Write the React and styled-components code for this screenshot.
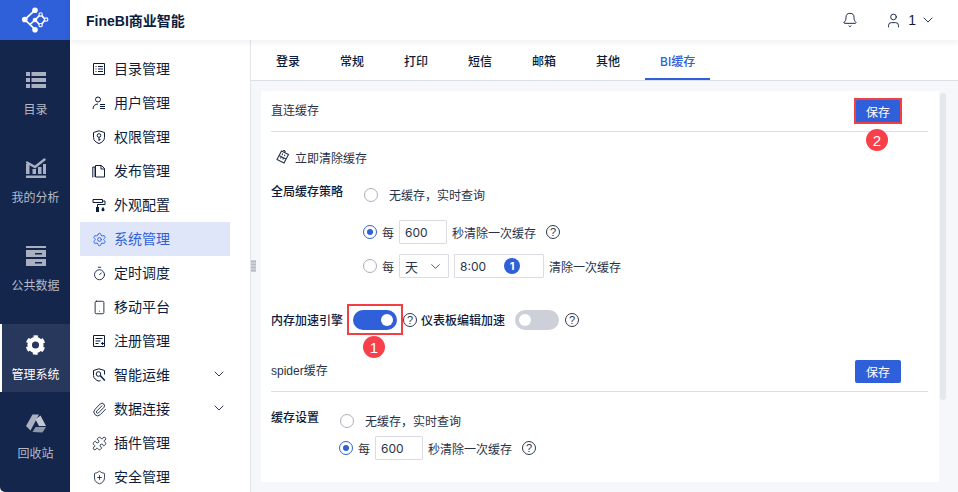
import React from 'react';
import styled, { createGlobalStyle } from 'styled-components';
import { ChevronDown, Settings, Timer, Smartphone, Paperclip, Puzzle, ShieldPlus, Bell, User } from 'lucide-react';

const FONT = '"Liberation Sans", "Noto Sans CJK SC", sans-serif';
const BLUE = '#2f5fd9';
const INK = '#0c1c3c';

const GlobalStyle = createGlobalStyle`
  html, body { margin: 0; padding: 0; background: #fff; }
  * { box-sizing: border-box; }
  body { font-family: ${FONT}; color: ${INK}; }
`;

const Page = styled.div`
  display: flex;
  width: 958px;
  height: 492px;
  overflow: hidden;
`;

/* left rail */
const Rail = styled.nav`
  flex: 0 0 70px;
  background: #14264b;
  border-bottom-left-radius: 5px;
  display: flex;
  flex-direction: column;
`;
const Logo = styled.div`
  height: 40px;
  background: ${BLUE};
  display: flex;
  align-items: center;
  justify-content: center;
`;
const RailList = styled.div`
  display: flex;
  flex-direction: column;
  gap: 20px;
  padding-top: 20px;
`;
const RailItem = styled.div`
  height: 68px;
  padding-top: ${p => (p.$active ? 11 : 10)}px;
  margin-top: ${p => (p.$tight ? -8 : 0)}px;
  display: flex;
  flex-direction: column;
  align-items: center;
  gap: 10px;
  font-size: 12px;
  line-height: 20px;
  color: ${p => (p.$active ? '#fff' : '#b4bac8')};
  background: ${p => (p.$active ? '#28375c' : 'transparent')};
  border-left: 2px solid ${p => (p.$active ? '#fff' : 'transparent')};
  border-right: 1px solid transparent;
  svg { display: block; }
`;

/* right part */
const Main = styled.div`
  flex: 1;
  min-width: 0;
  display: flex;
  flex-direction: column;
`;
const TopBar = styled.header`
  flex: 0 0 40px;
  display: flex;
  align-items: center;
  padding: 0 22px 0 16px;
  background: #fff;
  box-shadow: 0 2px 6px rgba(20, 38, 75, 0.08);
  position: relative;
  z-index: 2;
`;
const Title = styled.div`
  font-size: 14px;
  font-weight: 700;
  flex: 1;
`;
const BellWrap = styled.div`
  display: flex;
  margin-right: 27px;
`;
const UserBox = styled.div`
  display: flex;
  align-items: center;
  font-size: 14px;
  gap: 4px;
  svg { display: block; }
`;
const Body = styled.div`
  flex: 1;
  min-height: 0;
  display: flex;
`;

/* second level menu */
const SideMenu = styled.aside`
  flex: 0 0 181px;
  padding: 12px 0 0 10px;
  border-right: 1px solid #e3e5ec;
  background: #fff;
  position: relative;
`;
const MenuItem = styled.div`
  width: 150px;
  height: 34px;
  display: flex;
  align-items: center;
  padding-left: 13px;
  font-size: 14px;
  color: ${p => (p.$active ? BLUE : INK)};
  background: ${p => (p.$active ? '#e0e6f9' : 'transparent')};
`;
const MenuIcon = styled.span`
  flex: 0 0 21px;
  display: flex;
  margin-left: -1px;
  margin-right: 1px;
  svg { display: block; }
`;
const MenuLabel = styled.span`
  flex: 1;
  margin-top: -2px;
`;
const MenuArrow = styled.span`
  display: flex;
  margin-right: 3px;
  margin-top: -2px;
`;
const Handle = styled.div`
  position: absolute;
  right: -6px;
  top: 220px;
  width: 5px;
  height: 12px;
  background-image: radial-gradient(#b5bac7 0.8px, transparent 0.9px);
  background-size: 2px 3px;
`;

const Content = styled.section`
  flex: 1;
  min-width: 0;
  display: flex;
  flex-direction: column;
  background: #f6f7fb;
`;
const Tabs = styled.div`
  flex: 0 0 41px;
  display: flex;
  padding-left: 5px;
  background: #fff;
  border-bottom: 1px solid #dcdfe6;
`;
const Tab = styled.div`
  position: relative;
  height: 40px;
  padding: 0 20px;
  display: flex;
  align-items: center;
  font-size: 12px;
  font-weight: 500;
  font-family: "Inter", "Noto Sans CJK SC", sans-serif;
  color: ${p => (p.$active ? BLUE : INK)};
  &::after {
    content: '';
    display: ${p => (p.$active ? 'block' : 'none')};
    position: absolute;
    left: 5px;
    right: 5px;
    bottom: 0;
    height: 2px;
    background: ${BLUE};
  }
`;
const Scroller = styled.div`
  flex: 1;
  min-height: 0;
  display: flex;
  gap: 1px;
  padding: 10px 0 10px 10px;
`;
const Panel = styled.div`
  width: 678px;
  background: #fff;
  padding: 0 11px 0 10px;
  overflow: hidden;
  font-size: 12px;
`;
const ScrollThumb = styled.div`
  width: 6px;
  height: 307px;
  margin-top: 2px;
  border-radius: 3px;
  background: #e5e7ee;
`;

const SectionHead = styled.div`
  height: 41px;
  display: flex;
  align-items: center;
  justify-content: space-between;
  padding: ${p => (p.$top ? 0 : 1)}px 27px 0 0;
  border-bottom: 1px solid #dcdfe6;
  margin-top: ${p => p.$top || 0}px;
  color: #27334b;
`;
const HeadTitle = styled.span`
  margin-top: ${p => (p.$top ? -3 : -4)}px;
`;
const SaveWrap = styled.div`
  position: relative;
  display: flex;
`;
const SaveButton = styled.div`
  width: 46px;
  height: 23px;
  display: flex;
  align-items: center;
  justify-content: center;
  background: ${BLUE};
  color: #fff;
  border-radius: 2px;
  font-size: 12px;
`;
const MarkBox = styled.div`
  position: absolute;
  left: ${p => p.$l}px;
  top: ${p => p.$t}px;
  width: ${p => p.$w}px;
  height: ${p => p.$h}px;
  border: 2px solid #f23f44;
`;
const MarkBadge = styled.div`
  position: absolute;
  left: ${p => p.$l}px;
  top: ${p => p.$t}px;
  width: 22px;
  height: 22px;
  border-radius: 50%;
  background: #f8404a;
  color: #fff;
  font-size: 15px;
  display: flex;
  align-items: center;
  justify-content: center;
`;
const ClearRow = styled.div`
  display: flex;
  align-items: center;
  gap: 5px;
  height: 24px;
  margin-top: 13px;
  padding-left: 5px;
  color: #27334b;
  svg { display: block; }
`;
const FieldRow = styled.div`
  display: flex;
  align-items: center;
  height: 24px;
  margin-top: ${p => p.$top || 0}px;
  padding-left: ${p => p.$indent || 0}px;
  color: #27334b;
  position: relative;
`;
const FieldLabel = styled.div`
  width: ${p => p.$w}px;
  flex: none;
  align-self: flex-start;
  margin-top: ${p => p.$mt || 0}px;
  margin-left: ${p => p.$ml || 0}px;
  line-height: 16px;
  font-weight: 500;
  font-family: "Noto Sans CJK SC", sans-serif;
  color: ${INK};
`;
const Radio = styled.span`
  flex: none;
  width: 14px;
  height: 14px;
  border-radius: 50%;
  border: 1px solid ${p => (p.$on ? BLUE : '#a9afbd')};
  display: flex;
  align-items: center;
  justify-content: center;
  &::after {
    content: '';
    display: ${p => (p.$on ? 'block' : 'none')};
    width: 6px;
    height: 6px;
    border-radius: 50%;
    background: ${BLUE};
  }
`;
const Text = styled.span`
  margin-left: ${p => p.$ml || 0}px;
  margin-top: ${p => (p.$up ? -2 : 0)}px;
`;
const Box = styled.div`
  flex: none;
  width: ${p => p.$w}px;
  height: 24px;
  margin-left: ${p => p.$ml || 0}px;
  border: 1px solid #d9dce4;
  border-radius: 1px;
  padding: 0 5px 0 5px;
  display: flex;
  align-items: center;
  justify-content: space-between;
  font-family: "Inter", ${FONT};
  font-size: ${p => p.$fs || 12}px;
  color: #27334b;
`;
const StepBadge = styled.span`
  width: 16px;
  height: 16px;
  margin-right: 18px;
  border-radius: 50%;
  background: ${BLUE};
  color: #fff;
  font-size: 11px;
  font-weight: 700;
  display: flex;
  align-items: center;
  justify-content: center;
`;
const Help = styled.span`
  flex: none;
  width: 14px;
  height: 14px;
  margin-left: ${p => p.$ml || 0}px;
  border: 1px solid #2d3850;
  border-radius: 50%;
  font-size: 11px;
  line-height: 12px;
  text-align: center;
  color: #2d3850;
`;
const Toggle = styled.span`
  flex: none;
  position: relative;
  width: 44px;
  height: 20px;
  margin-left: ${p => p.$ml || 0}px;
  border-radius: 10px;
  background: ${p => (p.$on ? BLUE : '#cdd0d8')};
  &::after {
    content: '';
    position: absolute;
    top: 4px;
    left: ${p => (p.$on ? 28 : 4)}px;
    width: 12px;
    height: 12px;
    border-radius: 50%;
    background: #fff;
  }
`;

const LogoIcon = () => (
  <svg width="28" height="28" viewBox="0 0 30 30">
    <g stroke="#fff" strokeWidth="1.8" fill="none">
      <path d="M15 4.500L4 14.500L15 25M15 15L9.500 20M15 15L21 21L26 14.500L21 9L15 15" />
    </g>
    <circle cx="15" cy="4.500" r="3" fill="#fff" />
    <circle cx="4" cy="14.500" r="3" fill="#fff" />
    <circle cx="15" cy="25.500" r="3" fill="#fff" />
    <circle cx="15" cy="15" r="2.500" fill="#fff" />
    <circle cx="21" cy="9" r="1.800" fill={BLUE} stroke="#fff" strokeWidth="1.200" />
    <circle cx="27" cy="14.500" r="1.800" fill={BLUE} stroke="#fff" strokeWidth="1.200" />
    <circle cx="21" cy="20.500" r="1.800" fill={BLUE} stroke="#fff" strokeWidth="1.200" />
  </svg>
);

const RAIL = '#a9b0c0';
const ListIcon = () => (
  <svg width="20" height="20" viewBox="0 0 20 20" fill={RAIL}>
    <path d="M0 2h4v4H0zM5.500 2H20v4H5.500zM0 8h4v4H0zM5.500 8H20v4H5.500zM0 14h4v4H0zM5.500 14H20v4H5.500z" />
  </svg>
);
const AnalysisIcon = () => (
  <svg width="20" height="20" viewBox="0 0 20 20" fill={RAIL}>
    <path d="M0 6h3.500v10H0zM6.500 11h3.500v5H6.500zM12 9h3.500v7H12zM17 6h3v10h-3zM0 17.500h20V20H0z" />
    <path d="M1 4.500l8 4.500 9.500-7.500" stroke={RAIL} strokeWidth="2.400" fill="none" strokeLinecap="round" />
  </svg>
);
const DataIcon = () => (
  <svg width="20" height="20" viewBox="0 0 20 20" fill={RAIL}>
    <path d="M0 0h20v2H0z" />
    <path fillRule="evenodd" d="M0 4h20v7H0zM9 7v1.500h7V7zM0 13h20v7H0zM9 16v1.500h7V16z" />
  </svg>
);
const GearIcon = () => (
  <svg width="21" height="20" viewBox="0 0 24 24" fill="none" stroke="#fff">
    <circle cx="12" cy="12" r="7" strokeWidth="5.500" />
    <circle cx="12" cy="12" r="10" strokeWidth="3.500" strokeDasharray="5.470 5" strokeDashoffset="2.700" transform="rotate(-90 12 12)" />
  </svg>
);
const TrashIcon = () => (
  <svg width="20" height="20" viewBox="0 0 20 20">
    <path d="M6.500 0.500h6.500L8 10 4.500 16.500 0 12z" fill={RAIL} />
    <path d="M14.500 1.500L20 12h-7L9.500 5.500z" fill="#c3c8d4" />
    <path d="M6.500 18L9.500 13H20l-3.500 5.500z" fill="#8e96a9" />
  </svg>
);

const DirIcon = () => (
  <svg width="14" height="14" viewBox="0 0 14 14" fill="none" stroke={INK}>
    <path d="M1.500 1.500h11v11h-11zM3.500 4.500h1M6 4.500h5M3.500 7h1M6 7h5M3.500 9.500h1M6 9.500h5" />
  </svg>
);
const UserMgrIcon = () => (
  <svg width="14" height="14" viewBox="0 0 14 14" fill="none" stroke={INK}>
    <circle cx="6" cy="3.500" r="2.500" />
    <path d="M1 13c0-3 2-5 5-5M8 8.500h5M8 10.500h5M8 12.500h5" />
  </svg>
);
const AuthIcon = () => (
  <svg width="14" height="14" viewBox="0 0 14 14" fill="none" stroke={INK}>
    <path d="M7 .8l5.500 1.700v5c0 3-2.500 5-5.500 6-3-1-5.500-3-5.500-6v-5z" />
    <circle cx="7" cy="5.500" r="1.800" />
    <path d="M7 7.300V11M7 9.500h1.500" />
  </svg>
);
const PublishIcon = () => (
  <svg width="14" height="14" viewBox="0 0 14 14" fill="none" stroke={INK}>
    <path d="M3 13V3H.8v10.500M3.500 1.500h6l3 3v8.500h-9zM9 1.500v3.500h3.500" />
  </svg>
);
const SkinIcon = () => (
  <svg width="14" height="14" viewBox="0 0 14 14" fill="none" stroke={INK}>
    <path d="M1 1.500h9.500v3H1zM10.500 3H13v3.500H5.500V9" />
    <path d="M4 9h3v5H4z" fill={INK} stroke="none" />
    <path d="M11 9c1 1.300 1.500 2 1.500 2.800a1.500 1.500 0 0 1-3 0c0-.8.500-1.500 1.500-2.800z" fill={INK} stroke="none" />
  </svg>
);
const RegisterIcon = () => (
  <svg width="14" height="14" viewBox="0 0 14 14" fill="none" stroke={INK}>
    <path d="M1.500 1.500h11v11h-11zM3.500 4.500h7M3.500 7h5M3.500 9.500h3M9 9.500h3M10.500 8v3" />
  </svg>
);
const OpsIcon = () => (
  <svg width="14" height="14" viewBox="0 0 14 14" fill="none" stroke={INK}>
    <path d="M7 .8l5.500 1.700v4M7 .8L1.500 2.500v5c0 2.800 2.500 4.700 5.500 5.700l1.500-.6" />
    <circle cx="6.500" cy="6" r="2.300" />
    <path d="M8.200 7.600l4.600 4.900" strokeWidth="1.500" />
  </svg>
);
const EraserIcon = () => (
  <svg width="14" height="14" viewBox="0 0 14 14" fill="none" stroke="#27334b" strokeWidth="1.100">
    <path d="M5.500 1l7 3.500-4.500 8.500-7-3.500zM7 .5l1-.3 1.500 2M3.500 5.700l7 3.500M5.300 7l-.8 1.500M7.500 8l-.8 1.500M6.700 3.500L6 5M9 4.700L8.300 6" />
  </svg>
);

const menu = [
  { label: '目录管理', icon: <DirIcon /> },
  { label: '用户管理', icon: <UserMgrIcon /> },
  { label: '权限管理', icon: <AuthIcon /> },
  { label: '发布管理', icon: <PublishIcon /> },
  { label: '外观配置', icon: <SkinIcon /> },
  { label: '系统管理', icon: <Settings size={15} strokeWidth={1.5} />, active: true },
  { label: '定时调度', icon: <Timer size={15} strokeWidth={1.4} /> },
  { label: '移动平台', icon: <Smartphone size={15} strokeWidth={1.4} /> },
  { label: '注册管理', icon: <RegisterIcon /> },
  { label: '智能运维', icon: <OpsIcon />, more: true },
  { label: '数据连接', icon: <Paperclip size={15} strokeWidth={1.4} />, more: true },
  { label: '插件管理', icon: <Puzzle size={15} strokeWidth={1.4} /> },
  { label: '安全管理', icon: <ShieldPlus size={15} strokeWidth={1.3} /> },
];

const tabs = ['登录', '常规', '打印', '短信', '邮箱', '其他', 'BI缓存'];

const App = () => (
  <Page>
    <GlobalStyle />
    <Rail>
      <Logo><LogoIcon /></Logo>
      <RailList>
        <RailItem><ListIcon />目录</RailItem>
        <RailItem><AnalysisIcon />我的分析</RailItem>
        <RailItem><DataIcon />公共数据</RailItem>
        <RailItem $active><GearIcon />管理系统</RailItem>
        <RailItem $tight><TrashIcon />回收站</RailItem>
      </RailList>
    </Rail>
    <Main>
      <TopBar>
        <Title>FineBI商业智能</Title>
        <BellWrap><Bell size={16} strokeWidth={1.4} color={INK} /></BellWrap>
        <UserBox>
          <User size={17} strokeWidth={1.3} color={INK} />
          <Text $ml={2}>1</Text>
          <ChevronDown size={16} strokeWidth={1.3} color={INK} />
        </UserBox>
      </TopBar>
      <Body>
        <SideMenu>
          {menu.map(item => (
            <MenuItem key={item.label} $active={item.active}>
              <MenuIcon>{item.icon}</MenuIcon>
              <MenuLabel>{item.label}</MenuLabel>
              {item.more ? <MenuArrow><ChevronDown size={16} strokeWidth={1.3} /></MenuArrow> : null}
            </MenuItem>
          ))}
          <Handle />
        </SideMenu>
        <Content>
          <Tabs>
            {tabs.map(tab => (
              <Tab key={tab} $active={tab === 'BI缓存'}>{tab}</Tab>
            ))}
          </Tabs>
          <Scroller>
            <Panel>
              <SectionHead>
                <HeadTitle>直连缓存</HeadTitle>
                <SaveWrap>
                  <SaveButton>保存</SaveButton>
                  <MarkBox $l={-1} $t={-2} $w={48} $h={26} />
                  <MarkBadge $l={11} $t={29}>2</MarkBadge>
                </SaveWrap>
              </SectionHead>
              <ClearRow><EraserIcon />立即清除缓存</ClearRow>

              <FieldRow $top={14}>
                <FieldLabel $w={93} $mt={0}>全局缓存策略</FieldLabel>
                <Radio />
                <Text $ml={11} $up>无缓存，实时查询</Text>
              </FieldRow>
              <FieldRow $top={13} $indent={92}>
                <Radio $on />
                <Text $ml={5}>每</Text>
                <Box $w={48} $ml={5}>600</Box>
                <Text $ml={5}>秒清除一次缓存</Text>
                <Help $ml={10}>?</Help>
              </FieldRow>
              <FieldRow $top={10} $indent={92}>
                <Radio />
                <Text $ml={5}>每</Text>
                <Box $w={50} $ml={5} $fs={13}>天<ChevronDown size={15} strokeWidth={1.3} /></Box>
                <Box $w={90} $ml={5}>8:00<StepBadge>1</StepBadge></Box>
                <Text $ml={5}>清除一次缓存</Text>
              </FieldRow>

              <FieldRow $top={30}>
                <FieldLabel $w={82} $mt={4}>内存加速引擎</FieldLabel>
                <Toggle $on />
                <MarkBox $l={76} $t={-4} $w={56} $h={31} />
                <MarkBadge $l={92} $t={28}>1</MarkBadge>
                <Help $ml={6}>?</Help>
                <FieldLabel $w={94} $mt={4} $ml={4}>仪表板编辑加速</FieldLabel>
                <Toggle />
                <Help $ml={6}>?</Help>
              </FieldRow>

              <SectionHead $top={19}>
                <HeadTitle $top>spider缓存</HeadTitle>
                <SaveWrap><SaveButton>保存</SaveButton></SaveWrap>
              </SectionHead>

              <FieldRow $top={17}>
                <FieldLabel $w={69}>缓存设置</FieldLabel>
                <Radio />
                <Text $ml={11} $up>无缓存，实时查询</Text>
              </FieldRow>
              <FieldRow $top={3} $indent={68}>
                <Radio $on />
                <Text $ml={5}>每</Text>
                <Box $w={48} $ml={5}>600</Box>
                <Text $ml={5}>秒清除一次缓存</Text>
                <Help $ml={10}>?</Help>
              </FieldRow>
            </Panel>
            <ScrollThumb />
          </Scroller>
        </Content>
      </Body>
    </Main>
  </Page>
);

export default App;
